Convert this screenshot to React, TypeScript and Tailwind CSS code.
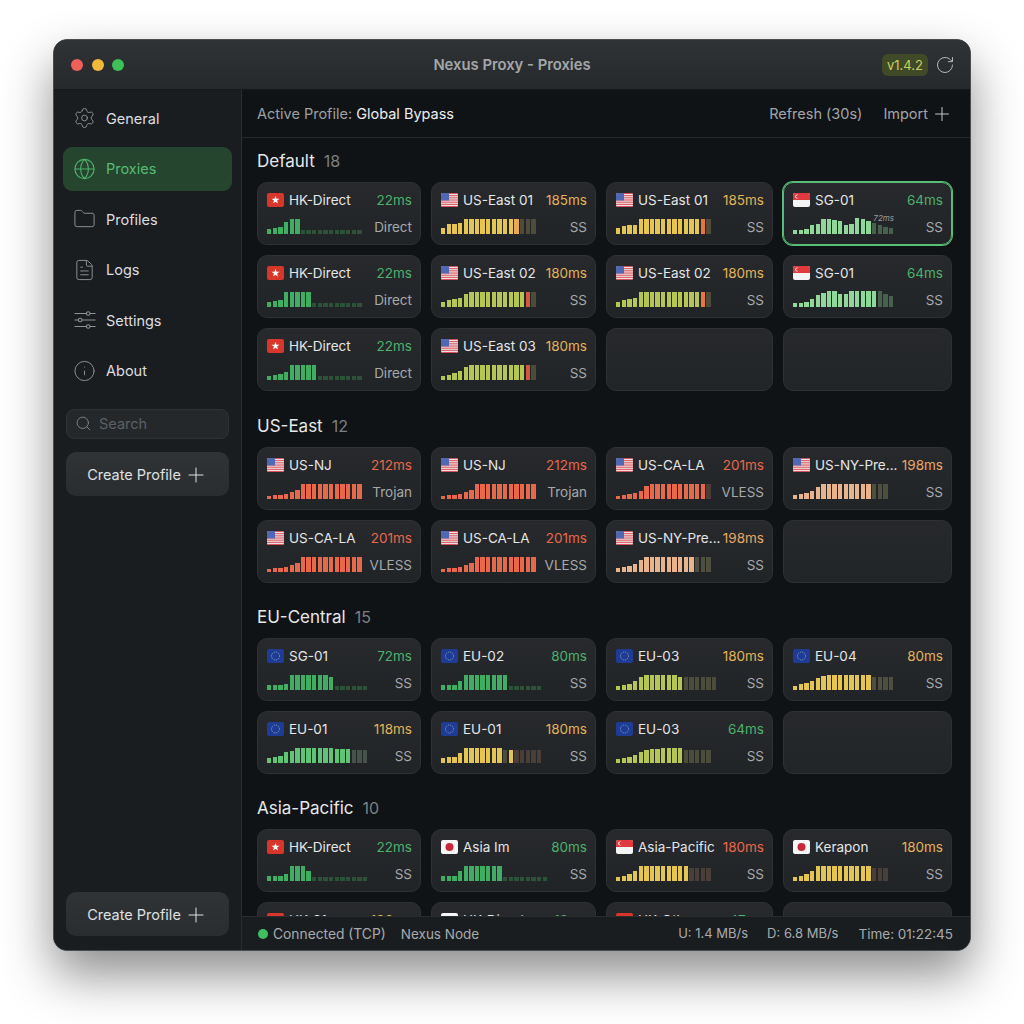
import { FileText, Folder, Globe, Info, Plus, RotateCw, Search, Settings } from "lucide-react";

const barColors: Record<string, string> = {
    g: "bg-[#3fae62]",
    G: "bg-[#2c5238]",
    l: "bg-[#8fd89a]",
    L: "bg-[#46624c]",
    m: "bg-[#5fc476]",
    M: "bg-[#45534a]",
    y: "bg-[#e5c552]",
    Y: "bg-[#4f4c3a]",
    o: "bg-[#e8a955]",
    r: "bg-[#e8694a]",
    b: "bg-[#b5c655]",
    B: "bg-[#4b4d3a]",
    p: "bg-[#e8b48c]",
    P: "bg-[#4f4f3f]",
    x: "bg-[#d2583c]",
    t: "bg-[#e8763f]",
    n: "bg-[#4a3f38]",
};

const latencyColors: Record<string, string> = {
    green: "text-[#4cb26c]",
    yellow: "text-[#e3b458]",
    peach: "text-[#e8a868]",
    red: "text-[#e8694a]",
};

type Flag = "hk" | "us" | "sg" | "eu" | "jp";
type Proxy = {
    flag: Flag;
    name: string;
    ms: string;
    tone: string;
    type: string;
    h?: number[];
    c?: string;
    selected?: boolean;
};

const small = (n: number) => Array(n).fill(4);

const hkA = { h: [5, 6, 7, 12, 15, 15, ...small(11)], c: "ggggggGGGGGGGGGGG" };
const hkB = { h: [5, 6, 7, 15, 15, 15, 15, 15, ...small(9)], c: "ggggggggGGGGGGGGG" };
const hkC = { h: [4, 5, 6, 8, 15, 15, 15, 15, 15, ...small(8)], c: "gggggggggGGGGGGGG" };
const e1 = { h: [6, 10, 10, 11, 15, 15, 15, 15, 15, 15, 15, 15, 15, 15, 15, 15, 15], c: "yyyyyyyyyyyyyoYYY" };
const e1b = { h: [6, 8, 9, 9, 15, 15, 15, 15, 15, 15, 15, 15, 15, 15, 15, 15, 15], c: "yyyyyyyyyyyyyyytY" };
const e2 = { h: [5, 7, 8, 9, 13, 15, 15, 15, 15, 15, 15, 15, 15, 15, 15, 15, 15], c: "bbbbbbbbbbbbbbbxB" };
const e2b = { h: [5, 7, 8, 9, 15, 15, 15, 15, 15, 15, 15, 15, 15, 15, 15, 15, 15], c: "bbbbbbbbbbbbbbbtB" };
const e3 = { h: [4, 5, 7, 9, 13, 15, 15, 15, 15, 15, 15, 15, 15, 15, 15, 15, 15], c: "bbbbbbbbbbbbbbbxB" };
const sgA = { h: [4, 4, 5, 9, 10, 15, 15, 14, 13, 9, 10, 16, 15, 13, 11, 9, 7, 6], c: "llllllllllllllLLLL" };
const sgB = { h: [4, 4, 5, 8, 12, 14, 16, 16, 13, 13, 16, 16, 16, 16, 16, 16, 13, 11], c: "lllllllllllllllLLL" };
const nj = { h: [3, 4, 4, 5, 7, 9, 15, 15, 15, 15, 15, 15, 15, 15, 15, 15, 15], c: "rrrrrrrrrrrrrrrrr" };
const la = { h: [3, 4, 5, 6, 8, 13, 15, 15, 15, 15, 15, 15, 15, 15, 15, 15, 15], c: "rrrrrrrrrrrrrrrrn" };
const ny = { h: [4, 5, 6, 8, 12, 15, 15, 15, 15, 15, 15, 15, 15, 15, 15, 15, 15], c: "ppppppppppppppPPP" };

const defaultRows: Proxy[] = [
    { flag: "hk", name: "HK-Direct", ms: "22ms", tone: "green", type: "Direct", ...hkA },
    { flag: "us", name: "US-East 01", ms: "185ms", tone: "yellow", type: "SS", ...e1 },
    { flag: "us", name: "US-East 01", ms: "185ms", tone: "yellow", type: "SS", ...e1b },
    { flag: "sg", name: "SG-01", ms: "64ms", tone: "green", type: "SS", selected: true, ...sgA },
    { flag: "hk", name: "HK-Direct", ms: "22ms", tone: "green", type: "Direct", ...hkB },
    { flag: "us", name: "US-East 02", ms: "180ms", tone: "yellow", type: "SS", ...e2 },
    { flag: "us", name: "US-East 02", ms: "180ms", tone: "yellow", type: "SS", ...e2b },
    { flag: "sg", name: "SG-01", ms: "64ms", tone: "green", type: "SS", ...sgB },
    { flag: "hk", name: "HK-Direct", ms: "22ms", tone: "green", type: "Direct", ...hkC },
    { flag: "us", name: "US-East 03", ms: "180ms", tone: "yellow", type: "SS", ...e3 },
];

const usRows: Proxy[] = [
    { flag: "us", name: "US-NJ", ms: "212ms", tone: "red", type: "Trojan", ...nj },
    { flag: "us", name: "US-NJ", ms: "212ms", tone: "red", type: "Trojan", ...nj },
    { flag: "us", name: "US-CA-LA", ms: "201ms", tone: "red", type: "VLESS", ...la },
    { flag: "us", name: "US-NY-Pre...", ms: "198ms", tone: "peach", type: "SS", ...ny },
    { flag: "us", name: "US-CA-LA", ms: "201ms", tone: "red", type: "VLESS", ...nj },
    { flag: "us", name: "US-CA-LA", ms: "201ms", tone: "red", type: "VLESS", ...nj },
    { flag: "us", name: "US-NY-Pre...", ms: "198ms", tone: "peach", type: "SS", ...ny },
];

const euRows: Proxy[] = [
    { flag: "eu", name: "SG-01", ms: "72ms", tone: "green", type: "SS", h: [5, 5, 5, 6, 15, 15, 15, 15, 15, 15, 15, 13, ...small(6)], c: "ggggggggggggGGGGGG" },
    { flag: "eu", name: "EU-02", ms: "80ms", tone: "green", type: "SS", h: [5, 5, 5, 9, 15, 15, 15, 15, 15, 15, 15, 15, ...small(6)], c: "ggggggggggggGGGGGG" },
    { flag: "eu", name: "EU-03", ms: "180ms", tone: "yellow", type: "SS", h: [4, 5, 6, 9, 13, 15, 15, 15, 15, 15, 15, 13, 13, 13, 13, 13, 13, 13], c: "bbbbbbbbbbbbBBBBBB" },
    { flag: "eu", name: "EU-04", ms: "80ms", tone: "yellow", type: "SS", h: [4, 6, 7, 9, 12, 14, 15, 15, 15, 15, 15, 15, 15, 15, 13, 13, 13, 13], c: "yyyyyyyyyyyyyyPPPP" },
    { flag: "eu", name: "EU-01", ms: "118ms", tone: "yellow", type: "SS", h: [5, 6, 7, 11, 12, 15, 15, 15, 15, 15, 15, 15, 14, 14, 14, 13, 13, 13], c: "mmmmmmmmmmmmmmmMMM" },
    { flag: "eu", name: "EU-01", ms: "180ms", tone: "yellow", type: "SS", h: [5, 6, 6, 10, 15, 15, 15, 15, 15, 15, 15, 13, 13, 13, 13, 13, 13, 13], c: "yyyyyyyyyyyYynnnnn" },
    { flag: "eu", name: "EU-03", ms: "64ms", tone: "green", type: "SS", h: [4, 5, 6, 8, 11, 13, 14, 14, 15, 15, 15, 15, 13, 13, 13, 13, 13], c: "bbbbbbbbbbbbBBBBB" },
];

const asiaRows: Proxy[] = [
    { flag: "hk", name: "HK-Direct", ms: "22ms", tone: "green", type: "SS", h: [5, 5, 5, 7, 15, 15, 15, 10, ...small(10)], c: "ggggggggGGGGGGGGGG" },
    { flag: "jp", name: "Asia Im", ms: "80ms", tone: "green", type: "SS", h: [5, 5, 5, 10, 15, 15, 15, 15, 15, 15, 15, ...small(8)], c: "gggggggggggGGGGGGGG" },
    { flag: "sg", name: "Asia-Pacific", ms: "180ms", tone: "red", type: "SS", h: [4, 5, 7, 10, 15, 15, 15, 15, 15, 15, 15, 15, 15, 13, 13, 13, 13], c: "yyyyyyyyyyyyynnnn" },
    { flag: "jp", name: "Kerapon", ms: "180ms", tone: "yellow", type: "SS", h: [4, 5, 7, 10, 15, 15, 15, 15, 15, 15, 15, 15, 15, 15, 13, 13, 13], c: "yyyyyyyyyyyyyynnn" },
    { flag: "hk", name: "HK-01", ms: "196ms", tone: "yellow", type: "SS", ...hkA },
    { flag: "jp", name: "HK-Direct", ms: "12ms", tone: "green", type: "SS", ...hkA },
    { flag: "hk", name: "HK-Other", ms: "47ms", tone: "green", type: "SS", ...hkA },
];

function FlagIcon({ flag }: { flag: Flag }) {
    const cls = "w-[17px] h-[14px] rounded-[2px] shrink-0";
    if (flag === "hk") {
        return (
            <svg viewBox="0 0 17 14" className={cls}>
                <rect width="17" height="14" fill="#d9362b" />
                <polygon points="8.5,2.8 9.5,5.7 12.5,5.7 10.1,7.6 11,10.6 8.5,8.8 6,10.6 6.9,7.6 4.5,5.7 7.5,5.7" fill="#fff" />
            </svg>
        );
    }
    if (flag === "us") {
        return (
            <svg viewBox="0 0 17 14" className={cls}>
                <rect width="17" height="14" fill="#f2f0f0" />
                <rect y="0" width="17" height="1.1" fill="#d8505a" />
                <rect y="2.15" width="17" height="1.1" fill="#d8505a" />
                <rect y="4.3" width="17" height="1.1" fill="#d8505a" />
                <rect y="6.45" width="17" height="1.1" fill="#d8505a" />
                <rect y="8.6" width="17" height="1.1" fill="#d8505a" />
                <rect y="10.75" width="17" height="1.1" fill="#d8505a" />
                <rect y="12.9" width="17" height="1.1" fill="#d8505a" />
                <rect width="8" height="7.5" fill="#5068b4" />
            </svg>
        );
    }
    if (flag === "sg") {
        return (
            <svg viewBox="0 0 17 14" className={cls}>
                <rect width="17" height="14" fill="#f4f4f4" />
                <rect width="17" height="7" fill="#e0393e" />
                <circle cx="4.2" cy="3.5" r="2" fill="#fff" />
                <circle cx="5" cy="3.5" r="1.8" fill="#e0393e" />
            </svg>
        );
    }
    if (flag === "eu") {
        return (
            <svg viewBox="0 0 17 14" className={cls}>
                <rect width="17" height="14" fill="#1f3c94" />
                <circle cx="8.5" cy="7" r="4" fill="none" stroke="#7f93c9" strokeWidth="1" strokeDasharray="1.2 0.9" />
            </svg>
        );
    }
    return (
        <svg viewBox="0 0 17 14" className={cls}>
            <rect width="17" height="14" fill="#f6f6f6" />
            <circle cx="8.5" cy="7" r="4" fill="#c8283a" />
        </svg>
    );
}

function Bars({ h, c }: { h: number[]; c: string }) {
    return (
        <div className="flex items-end gap-[1.3px] h-[16px]">
            {h.map((v, i) => (
                <div key={i} className={`w-[4.35px] ${barColors[c[i]]}`} style={{ height: v }} />
            ))}
        </div>
    );
}

function ProxyCard({ p }: { p: Proxy }) {
    return (
        <div
            className={`relative h-[63px] rounded-[10px] border bg-gradient-to-b from-[#27292c] to-[#212427] pl-[9px] pr-[8px] pt-[8px] ${
                p.selected ? "border-[#58bd78] ring-1 ring-[#58bd78]" : "border-[#2e3134]"
            }`}
        >
            <div className="flex items-center h-[18px] text-[13.5px] leading-[18px]">
                <FlagIcon flag={p.flag} />
                <span className="ml-[5px] text-[#e4e6e7] whitespace-nowrap">{p.name}</span>
                <span className={`ml-auto whitespace-nowrap ${latencyColors[p.tone]}`}>{p.ms}</span>
            </div>
            <div className="flex items-start justify-between h-[18px] mt-[9px]">
                {p.h && p.c && <Bars h={p.h} c={p.c} />}
                <span className="text-[13.5px] leading-[18px] text-[#a6a9ac]">{p.type}</span>
            </div>
            {p.selected && (
                <span className="absolute right-[57px] top-[30px] text-[8px] leading-[10px] italic text-[#9a9c9e]">72ms</span>
            )}
        </div>
    );
}

function EmptyCard() {
    return <div className="h-[63px] rounded-[10px] border border-[#2e3134] bg-gradient-to-b from-[#26282b] to-[#222528]" />;
}

function Section({ title, count, rows, empty, className }: { title: string; count: string; rows: Proxy[]; empty: number; className?: string }) {
    return (
        <section className={className}>
            <div className="flex items-baseline gap-[9px] h-[22px] leading-[22px] mb-[10px]">
                <span className="text-[17px] text-[#e6e8e9]">{title}</span>
                <span className="text-[16px] text-[#7c8083]">{count}</span>
            </div>
            <div className="grid grid-cols-[164px_165px_167px_169px] gap-x-[10px] gap-y-[10px]">
                {rows.map((p, i) => (
                    <ProxyCard key={i} p={p} />
                ))}
                {Array.from({ length: empty }).map((_, i) => (
                    <EmptyCard key={i} />
                ))}
            </div>
        </section>
    );
}

function SlidersIcon() {
    return (
        <svg viewBox="0 0 22 22" fill="none" stroke="currentColor" strokeWidth="1.1" className="w-[22px] h-[22px]">
            <path d="M0.5 4.5h12M16 4.5h5.5M0.5 11h4M8 11h13.5M0.5 17.5h12M16 17.5h5.5" />
            <circle cx="14.2" cy="4.5" r="1.8" />
            <circle cx="6.2" cy="11" r="1.8" />
            <circle cx="14.2" cy="17.5" r="1.8" />
        </svg>
    );
}

function NavItem({ icon, label, active }: { icon: React.ReactNode; label: string; active?: boolean }) {
    return (
        <div
            className={`flex items-center gap-[10px] h-[44px] pl-[10px] rounded-[9px] text-[14.5px] ${
                active ? "bg-[#25452f] text-[#57bb75]" : "text-[#dcdee0]"
            }`}
        >
            <span className={`w-[23px] flex justify-center ${active ? "text-[#4cb26c]" : "text-[#8f9295]"}`}>{icon}</span>
            <span className="pt-[1px]">{label}</span>
        </div>
    );
}

function CreateProfile({ className }: { className: string }) {
    return (
        <button className={`flex items-center justify-center gap-[3px] h-[44px] mx-[3px] rounded-[10px] bg-gradient-to-b from-[#303336] to-[#2a2d30] text-[14.5px] text-[#dfe1e2] ${className}`}>
            <span className="pt-[2px]">Create Profile</span>
            <Plus size={24} strokeWidth={1} className="mt-[2px]" />
        </button>
    );
}

export default function App() {
    return (
        <div className="w-[1024px] h-[1024px] bg-white pl-[53px] pt-[39px] font-[Inter,sans-serif]">
            <div className="flex flex-col w-[918px] h-[912px] rounded-[14px] overflow-hidden border border-[#4a4d50] bg-[#101315] shadow-[0_24px_50px_rgba(0,0,0,0.45)]">
                <header className="relative flex items-center shrink-0 h-[50px] pl-[17px] pr-[15px] bg-gradient-to-b from-[#303336] to-[#26292c] border-b border-[#15171a]">
                    <div className="flex gap-[8.5px]">
                        <span className="w-[12px] h-[12px] rounded-full bg-[#f0605a]" />
                        <span className="w-[12px] h-[12px] rounded-full bg-[#f0b93c]" />
                        <span className="w-[12px] h-[12px] rounded-full bg-[#3fbf57]" />
                    </div>
                    <span className="absolute left-0 right-0 pt-[1px] text-center text-[14.8px] font-semibold text-[#a3a6a8]">Nexus Proxy - Proxies</span>
                    <div className="ml-auto flex items-center gap-[7px]">
                        <span className="px-[5px] h-[22px] leading-[22px] rounded-[6px] bg-[#404a26] text-[13px] text-[#c9d05f]">v1.4.2</span>
                        <RotateCw size={20} strokeWidth={1.2} className="text-[#b4b6b8]" />
                    </div>
                </header>

                <div className="flex flex-1 min-h-0">
                    <aside className="flex flex-col w-[188px] shrink-0 px-[9px] pt-[6px] bg-[#1a1d20] border-r border-[#2a2d30]">
                        <nav className="flex flex-col gap-[6.5px]">
                            <NavItem icon={<Settings size={24} strokeWidth={1} />} label="General" />
                            <NavItem icon={<Globe size={24} strokeWidth={1.15} />} label="Proxies" active />
                            <NavItem icon={<Folder size={24} strokeWidth={1} />} label="Profiles" />
                            <NavItem icon={<FileText size={24} strokeWidth={1} />} label="Logs" />
                            <NavItem icon={<SlidersIcon />} label="Settings" />
                            <NavItem icon={<Info size={24} strokeWidth={1} />} label="About" />
                        </nav>
                        <div className="flex items-center gap-[7px] h-[30px] mx-[3px] mt-[16px] pl-[8px] rounded-[8px] border border-[#303336] bg-[#25282b] text-[14.5px] text-[#5c6064]">
                            <Search size={17} strokeWidth={1.25} className="text-[#85888b]" />
                            <span className="pt-[1px]">Search</span>
                        </div>
                        <CreateProfile className="mt-[13px]" />
                        <CreateProfile className="mt-auto mb-[14px]" />
                    </aside>

                    <main className="flex flex-col flex-1 min-w-0">
                        <div className="flex items-center shrink-0 h-[48px] pl-[15px] pr-[17px] pt-[1px] border-b border-[#24272a] text-[14.5px]">
                            <span className="text-[#9da0a3]">Active Profile:</span>
                            <span className="ml-[4px] text-[#eceeef]">Global Bypass</span>
                            <span className="ml-auto text-[#a2a5a8]">Refresh (30s)</span>
                            <span className="ml-[21px] text-[#a2a5a8]">Import</span>
                            <Plus size={22} strokeWidth={1.1} className="ml-[3px] text-[#c2c4c6]" />
                        </div>

                        <div className="flex-1 min-h-0 overflow-hidden pl-[15px] pt-[12px]">
                            <Section title="Default" count="18" rows={defaultRows} empty={2} />
                            <Section className="mt-[24px]" title="US-East" count="12" rows={usRows} empty={1} />
                            <Section className="mt-[23px]" title="EU-Central" count="15" rows={euRows} empty={1} />
                            <Section className="mt-[23px]" title="Asia-Pacific" count="10" rows={asiaRows} empty={1} />
                        </div>

                        <footer className="flex items-center shrink-0 h-[34px] pl-[16px] pr-[17px] pt-[1px] bg-[#1a1d20] border-t border-[#2a2d30] text-[13.5px] text-[#a8abae]">
                            <span className="w-[10px] h-[10px] rounded-full bg-[#3fbf62]" />
                            <span className="ml-[5px] text-[13.8px]">Connected (TCP)</span>
                            <span className="ml-[15px]">Nexus Node</span>
                            <span className="ml-auto text-[13px]">U: 1.4 MB/s</span>
                            <span className="ml-[19px] text-[13px]">D: 6.8 MB/s</span>
                            <span className="ml-[20px]">Time: 01:22:45</span>
                        </footer>
                    </main>
                </div>
            </div>
        </div>
    );
}
